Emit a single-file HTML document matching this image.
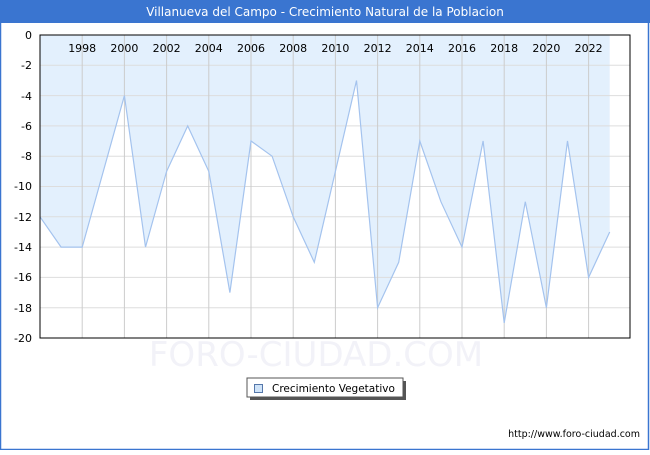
<!DOCTYPE html>
<html><head><style>
body{margin:0;width:650px;height:450px;background:#fff;font-family:"Liberation Sans","DejaVu Sans",sans-serif;overflow:hidden}
</style></head><body>
<svg width="650" height="450" xmlns="http://www.w3.org/2000/svg" font-family="DejaVu Sans, Liberation Sans, sans-serif">
<rect x="0" y="0" width="650" height="450" fill="#fff"/>
<rect x="0.5" y="0.5" width="648" height="449" fill="none" stroke="#3a75d0" stroke-width="1.5"/>
<rect x="0" y="0" width="650" height="23" fill="#3a75d0"/>
<text x="325" y="16" text-anchor="middle" fill="#fff" font-size="12">Villanueva del Campo - Crecimiento Natural de la Poblacion</text>
<rect x="40" y="35" width="590" height="303" fill="#fff"/>
<polygon fill="#e3f0fd" points="40,35 40,216.8 61.1,247.1 82.2,247.1 103.3,171.4 124.4,95.6 145.5,247.1 166.6,171.4 187.7,125.9 208.8,171.4 229.9,292.6 251,141 272.1,156.2 293.2,216.8 314.3,262.3 335.4,171.4 356.5,80.5 377.6,307.7 398.7,262.3 419.8,141 440.9,201.7 462,247.1 483.1,141 504.2,322.9 525.3,201.7 546.4,307.7 567.5,141 588.6,277.4 609.7,232 609.7,35"/>
<g stroke="#dddddd" stroke-width="1">
<line x1="40" y1="65.3" x2="630" y2="65.3"/><line x1="40" y1="95.6" x2="630" y2="95.6"/><line x1="40" y1="125.9" x2="630" y2="125.9"/><line x1="40" y1="156.2" x2="630" y2="156.2"/><line x1="40" y1="186.5" x2="630" y2="186.5"/><line x1="40" y1="216.8" x2="630" y2="216.8"/><line x1="40" y1="247.1" x2="630" y2="247.1"/><line x1="40" y1="277.4" x2="630" y2="277.4"/><line x1="40" y1="307.7" x2="630" y2="307.7"/>
</g>
<g stroke="#cccccc" stroke-width="1">
<line x1="82.2" y1="35" x2="82.2" y2="338"/><line x1="124.4" y1="35" x2="124.4" y2="338"/><line x1="166.6" y1="35" x2="166.6" y2="338"/><line x1="208.8" y1="35" x2="208.8" y2="338"/><line x1="251" y1="35" x2="251" y2="338"/><line x1="293.2" y1="35" x2="293.2" y2="338"/><line x1="335.4" y1="35" x2="335.4" y2="338"/><line x1="377.6" y1="35" x2="377.6" y2="338"/><line x1="419.8" y1="35" x2="419.8" y2="338"/><line x1="462" y1="35" x2="462" y2="338"/><line x1="504.2" y1="35" x2="504.2" y2="338"/><line x1="546.4" y1="35" x2="546.4" y2="338"/><line x1="588.6" y1="35" x2="588.6" y2="338"/>
</g>
<polyline fill="none" stroke="#a4c3ee" stroke-width="1.2" points="40,216.8 61.1,247.1 82.2,247.1 103.3,171.4 124.4,95.6 145.5,247.1 166.6,171.4 187.7,125.9 208.8,171.4 229.9,292.6 251,141 272.1,156.2 293.2,216.8 314.3,262.3 335.4,171.4 356.5,80.5 377.6,307.7 398.7,262.3 419.8,141 440.9,201.7 462,247.1 483.1,141 504.2,322.9 525.3,201.7 546.4,307.7 567.5,141 588.6,277.4 609.7,232"/>
<text x="316" y="366" text-anchor="middle" fill="#f2f2f8" font-size="34">FORO-CIUDAD.COM</text>
<rect x="40" y="35" width="590" height="303" fill="none" stroke="#000" stroke-width="1"/>
<g font-size="11" fill="#000" text-anchor="end">
<text x="32" y="39">0</text><text x="32" y="69">-2</text><text x="32" y="100">-4</text><text x="32" y="130">-6</text><text x="32" y="160">-8</text><text x="32" y="190">-10</text><text x="32" y="221">-12</text><text x="32" y="251">-14</text><text x="32" y="281">-16</text><text x="32" y="312">-18</text><text x="32" y="342">-20</text>
</g>
<g font-size="11" fill="#000" text-anchor="middle">
<text x="82.2" y="52">1998</text><text x="124.4" y="52">2000</text><text x="166.6" y="52">2002</text><text x="208.8" y="52">2004</text><text x="251" y="52">2006</text><text x="293.2" y="52">2008</text><text x="335.4" y="52">2010</text><text x="377.6" y="52">2012</text><text x="419.8" y="52">2014</text><text x="462" y="52">2016</text><text x="504.2" y="52">2018</text><text x="546.4" y="52">2020</text><text x="588.6" y="52">2022</text>
</g>
<rect x="250" y="381" width="156" height="19" fill="#555"/>
<rect x="247" y="378" width="156" height="19" fill="#fff" stroke="#555" stroke-width="1"/>
<rect x="254.5" y="384.5" width="8" height="8" fill="#cfe3f8" stroke="#5577aa" stroke-width="1"/>
<text x="272" y="392" font-size="10.5" fill="#000">Crecimiento Vegetativo</text>
<text x="640" y="437" text-anchor="end" font-size="9.5" fill="#000">http://www.foro-ciudad.com</text>
</svg>
</body></html>
